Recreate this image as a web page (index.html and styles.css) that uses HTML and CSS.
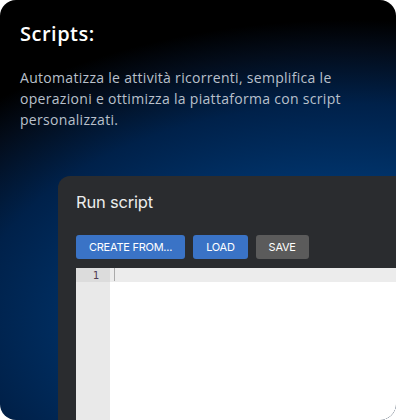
FILE: index.html
```html
<!DOCTYPE html>
<html>
<head>
<meta charset="utf-8">
<link rel="stylesheet" href="styles.css">
</head>
<body>
<div class="card">
  <h1 class="title">Scripts:</h1>
  <p class="desc">Automatizza le attività ricorrenti, semplifica le operazioni e ottimizza la piattaforma con script personalizzati.</p>
  <div class="panel">
    <div class="panel-title">Run script</div>
    <div class="buttons">
      <button class="btn btn-blue">CREATE FROM...</button>
      <button class="btn btn-blue">LOAD</button>
      <button class="btn btn-grey">SAVE</button>
    </div>
    <div class="editor">
      <div class="gutter"><div class="lineno active">1</div></div>
      <div class="code"><div class="line active"><span class="cursor"></span></div></div>
    </div>
  </div>
</div>
</body>
</html>
```
FILE: styles.css
```css
html, body { margin: 0; padding: 0; background: #ffffff; }
.card {
  width: 396px;
  height: 420px;
  box-sizing: border-box;
  border-radius: 16px;
  overflow: hidden;
  padding: 20px 0 0 20px;
  display: flex;
  flex-direction: column;
  background:
    radial-gradient(ellipse 520px 300px at 350px 320px, #003f80 0%, #00346c 45%, #00214a 72%, #030c1a 90%, #000000 100%),
    #000000;
  font-family: "Open Sans", "Liberation Sans", sans-serif;
}
.title {
  margin: 0;
  font-size: 20px;
  font-weight: 600;
  color: #ffffff;
  line-height: 28px;
  letter-spacing: 0.5px;
}
.desc {
  margin: 19px 0 0 0;
  width: 350px;
  font-size: 14px;
  line-height: 21px;
  color: #b9c0cb;
  letter-spacing: 0.3px;
}
.panel {
  margin: 46px 0 0 38px;
  flex: 1;
  background: #2a2c2f;
  border-top-left-radius: 12px;
  padding: 14px 0 0 18px;
  display: flex;
  flex-direction: column;
}
.panel-title {
  font-family: "Inter", "Liberation Sans", sans-serif;
  font-size: 16.5px;
  color: #ececec;
  line-height: 24px;
  letter-spacing: -0.2px;
}
.buttons {
  display: flex;
  gap: 8px;
  margin-top: 21px;
}
.btn {
  height: 24px;
  border: none;
  border-radius: 3px;
  color: #ffffff;
  font-family: "Inter", "Liberation Sans", sans-serif;
  font-size: 11px;
  padding: 0 13px;
  letter-spacing: -0.25px;
}
.btn-blue { background: #3a73c6; }
.btn-grey { background: #5b5b5b; }
.editor {
  margin-top: 9px;
  flex: 1;
  display: flex;
  background: #ffffff;
}
.gutter {
  width: 34px;
  background: #e9e9e9;
}
.lineno {
  height: 14px;
  line-height: 14px;
  font-family: "DejaVu Sans Mono", monospace;
  font-size: 10.5px;
  color: #4f3b52;
  text-align: right;
  padding-right: 11px;
  background: #dcdcdc;
}
.code { flex: 1; }
.line { height: 14px; }
.line.active { background: #ececec; }
.cursor {
  display: block;
  margin-left: 4px;
  width: 1px;
  height: 13px;
  background: #aaaaaa;
}
```
